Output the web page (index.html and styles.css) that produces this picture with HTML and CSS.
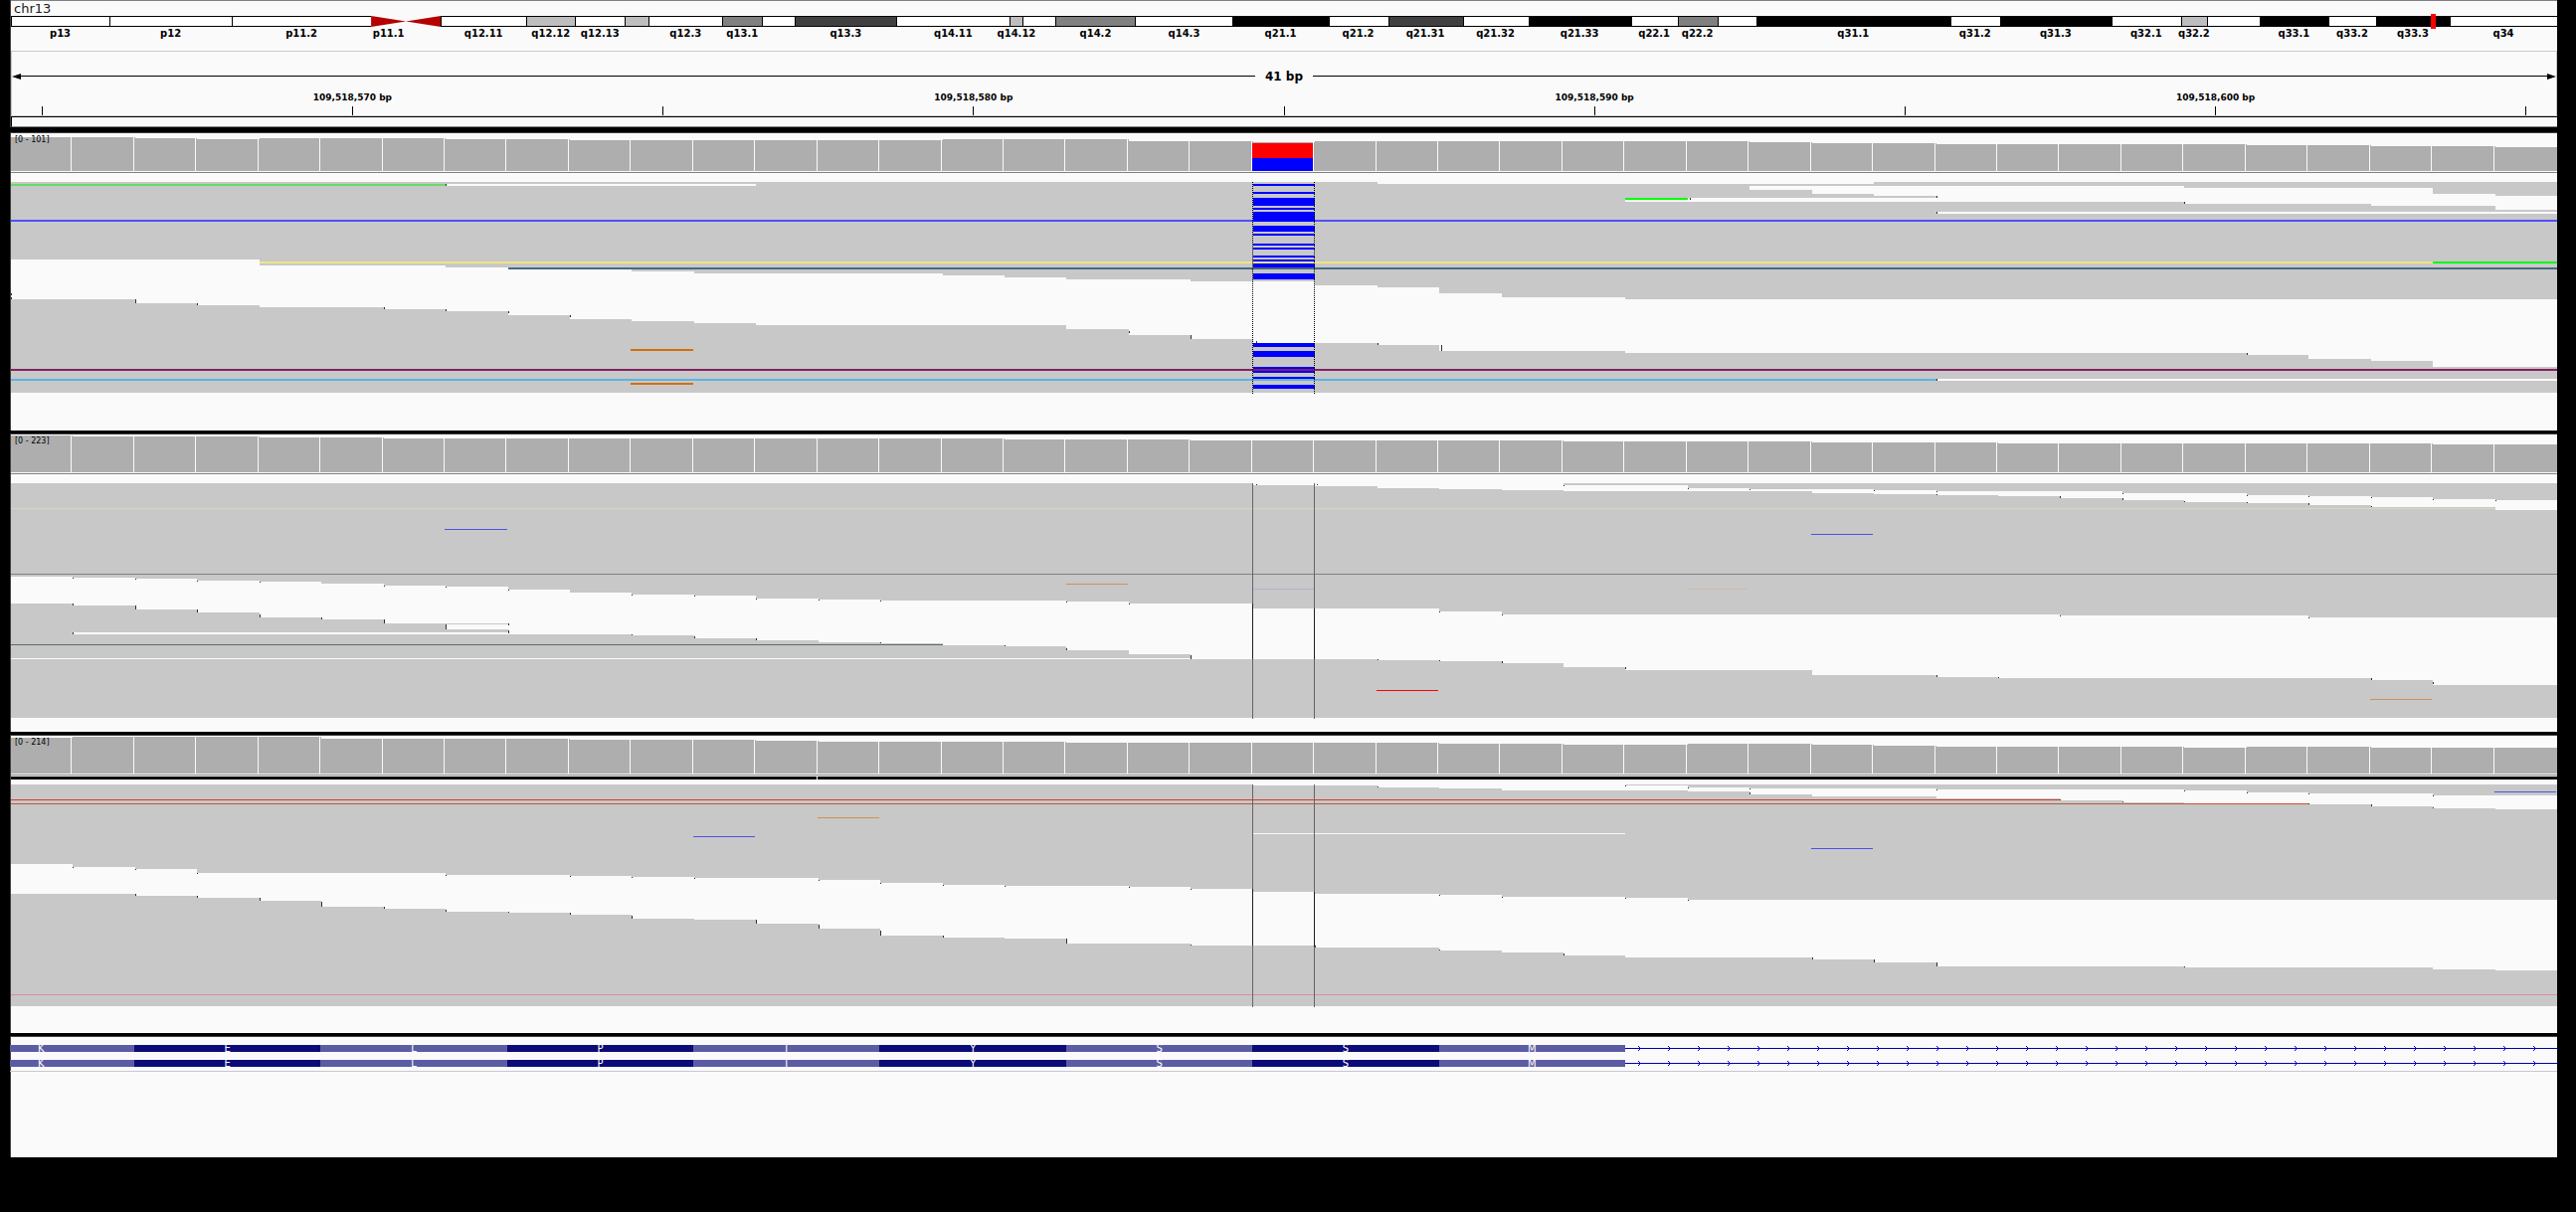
FILE: index.html
```html
<!DOCTYPE html>
<html lang="en">
<head>
<meta charset="utf-8">
<title>chr13 – genome browser</title>
<link rel="stylesheet" href="styles.css">
</head>
<body>
<main class="browser">

  <section class="chromosome">
    <h1 class="chromosome-name">chr13</h1>
    <div class="ideogram">
      <div class="band" style="flex-grow:99"><i class="stain"></i><span>p13</span></div>
      <div class="band" style="flex-grow:123"><i class="stain"></i><span>p12</span></div>
      <div class="band" style="flex-grow:140"><i class="stain"></i><span>p11.2</span></div>
      <div class="band" style="flex-grow:35"><i class="stain cen cen-p"></i><span>p11.1</span></div>
      <div class="band" style="flex-grow:35"><i class="stain cen cen-q"></i></div>
      <div class="band" style="flex-grow:86"><i class="stain"></i><span>q12.11</span></div>
      <div class="band" style="flex-grow:49"><i class="stain g25"></i><span>q12.12</span></div>
      <div class="band" style="flex-grow:50"><i class="stain"></i><span>q12.13</span></div>
      <div class="band" style="flex-grow:24"><i class="stain g25"></i></div>
      <div class="band" style="flex-grow:74"><i class="stain"></i><span>q12.3</span></div>
      <div class="band" style="flex-grow:40"><i class="stain g50"></i><span>q13.1</span></div>
      <div class="band" style="flex-grow:33"><i class="stain"></i></div>
      <div class="band" style="flex-grow:102"><i class="stain g75"></i><span>q13.3</span></div>
      <div class="band" style="flex-grow:114"><i class="stain"></i><span>q14.11</span></div>
      <div class="band" style="flex-grow:13"><i class="stain g25"></i><span>q14.12</span></div>
      <div class="band" style="flex-grow:33"><i class="stain"></i></div>
      <div class="band" style="flex-grow:80"><i class="stain g50"></i><span>q14.2</span></div>
      <div class="band" style="flex-grow:98"><i class="stain"></i><span>q14.3</span></div>
      <div class="band" style="flex-grow:96"><i class="stain g100"></i><span>q21.1</span></div>
      <div class="band" style="flex-grow:60"><i class="stain"></i><span>q21.2</span></div>
      <div class="band" style="flex-grow:75"><i class="stain g75"></i><span>q21.31</span></div>
      <div class="band" style="flex-grow:66"><i class="stain"></i><span>q21.32</span></div>
      <div class="band" style="flex-grow:103"><i class="stain g100"></i><span>q21.33</span></div>
      <div class="band" style="flex-grow:47"><i class="stain"></i><span>q22.1</span></div>
      <div class="band" style="flex-grow:40"><i class="stain g50"></i><span>q22.2</span></div>
      <div class="band" style="flex-grow:39"><i class="stain"></i></div>
      <div class="band" style="flex-grow:195"><i class="stain g100"></i><span>q31.1</span></div>
      <div class="band" style="flex-grow:50"><i class="stain"></i><span>q31.2</span></div>
      <div class="band" style="flex-grow:112"><i class="stain g100"></i><span>q31.3</span></div>
      <div class="band" style="flex-grow:70"><i class="stain"></i><span>q32.1</span></div>
      <div class="band" style="flex-grow:26"><i class="stain g25"></i><span>q32.2</span></div>
      <div class="band" style="flex-grow:53"><i class="stain"></i></div>
      <div class="band" style="flex-grow:69"><i class="stain g100"></i><span>q33.1</span></div>
      <div class="band" style="flex-grow:48"><i class="stain"></i><span>q33.2</span></div>
      <div class="band" style="flex-grow:74"><i class="stain g100"></i><span>q33.3</span></div>
      <div class="band" style="flex-grow:108"><i class="stain"></i><span>q34</span></div>
      <i class="locus" style="left:95.04%"></i>
    </div>
  </section>

  <section class="ruler">
    <div class="span-row">
      <svg class="arrow" width="9" height="6" viewBox="0 0 9 6"><path d="M0 3 9 0V6Z"/></svg>
      <i class="span-line"></i>
      <span class="span-text">41 bp</span>
      <i class="span-line"></i>
      <svg class="arrow" width="9" height="6" viewBox="0 0 9 6"><path d="M9 3 0 0V6Z"/></svg>
    </div>
    <div class="positions">
      <span class="pos-5">109,518,570 bp</span>
      <span class="pos-15">109,518,580 bp</span>
      <span class="pos-25">109,518,590 bp</span>
      <span class="pos-35">109,518,600 bp</span>
    </div>
    <svg class="plot ticks" height="9" viewBox="0 0 41 9" preserveAspectRatio="none">
      <path class="tick-line" d="M.5 0v9M5.5 0v9M10.5 0v9M15.5 0v9M20.5 0v9M25.5 0v9M30.5 0v9M35.5 0v9M40.5 0v9"/>
    </svg>
  </section>
  <div class="roi-bar"></div>

  <div class="divider divider-top"></div>

  <section class="track track-a">
    <div class="coverage">
      <span class="range">[0 - 101]</span>
      <svg class="plot" height="38" viewBox="0 0 41 38" preserveAspectRatio="none">
        <path class="bars" d="M0 38V4H2V5H3V6H4V5H7V6H9V7H15V6H18V8H20V9H21V8H28V9H29V10H31V11H36V12H38V13H40V14H41V38Z"/>
        <path fill="#f00" transform="translate(-.015 0)" d="M20 10h1v15h-1z"/>
        <path fill="#00f" transform="translate(-.015 0)" d="M20 25h1v13h-1z"/>
        <path id="gaps" class="gaps" transform="translate(-.025 0)" d="M1 0v38M2 0v38M3 0v38M4 0v38M5 0v38M6 0v38M7 0v38M8 0v38M9 0v38M10 0v38M11 0v38M12 0v38M13 0v38M14 0v38M15 0v38M16 0v38M17 0v38M18 0v38M19 0v38M20 0v38M21 0v38M22 0v38M23 0v38M24 0v38M25 0v38M26 0v38M27 0v38M28 0v38M29 0v38M30 0v38M31 0v38M32 0v38M33 0v38M34 0v38M35 0v38M36 0v38M37 0v38M38 0v38M39 0v38M40 0v38"/>
      </svg>
    </div>
    <svg class="plot reads" height="213" viewBox="0 0 41 213" preserveAspectRatio="none">
      <path class="read" d="M0 0H41V212H0Z"/>
      <path class="empty" d="M7 2h5v2h-5zM22 0h8v2h-8zM31 30h10v2h-10zM31 198h10v2h-10z"/>
      <path class="empty" d="M26 18V20H35V22H38V24H40V28H41V14H40V12H39V6H35V4H28V8H29V12H30V14H31V16H27V18Z"/>
      <path class="empty" d="M0 78H4V84H7V86H8V88H10V90H11V92H15V94H16V96H17V98H19V100H21V104H22V106H23V112H24V116H26V118H41V186H39V180H38V178H37V174H36V172H26V170H23V164H22V162H20V158H19V154H18V148H17V144H12V142H11V140H10V138H9V134H8V130H7V128H6V126H4V124H3V122H2V118H0Z"/>
      <path fill="#64dc64" d="M0 2h7v2h-7z"/>
      <path fill="#0f0" d="M26 16h1v2h-1zM39 80h2v2h-2z"/>
      <path fill="#5050ff" d="M0 38h41v2h-41z"/>
      <path fill="#f0e682" d="M4 80h35v2h-35z"/>
      <path fill="#d2700a" transform="translate(-.015 0)" d="M10 168h1v2h-1zM10 202h1v2h-1z"/>
      <path fill="#5ab4e1" d="M0 198h31v2h-31z"/>
      <path fill="#00f" d="M20 2h1v2h-1zM20 10h1v2h-1zM20 16h1v8h-1zM20 26h1v2h-1zM20 30h1v10h-1zM20 44h1v6h-1zM20 52h1v2h-1zM20 62h1v2h-1zM20 66h1v2h-1zM20 74h1v2h-1zM20 78h1v2h-1zM20 82h1v4h-1zM20 92h1v6h-1zM20 162h1v4h-1zM20 170h1v6h-1zM20 186h1v2h-1zM20 190h1v2h-1zM20 196h1v2h-1zM20 204h1v4h-1z"/>
      <path fill="#466a82" d="M8 86h33v2h-33z"/>
      <path fill="#82205f" d="M0 188h41v2h-41z"/>
      <path class="end" transform="translate(.008 0)" d="M7 2v2M0 112v2M0 116v2M2 118v4M3 122v2M6 126v2M7 128v2M8 130v2M9 134v2M18 150v2M19 154v4M20.05 160v2M22 162v2M23.03 164v6M36 172v2M27.03 16v2M31 14v2M31 30v2M35 20v2M31 198v2"/>
      <path class="center dashed" transform="translate(-.008 0)" d="M20 0v213M21 0v213"/>
    </svg>
  </section>

  <div class="divider"></div>

  <section class="track track-b">
    <div class="coverage">
      <span class="range">[0 - 223]</span>
      <svg class="plot" height="38" viewBox="0 0 41 38" preserveAspectRatio="none">
        <path class="bars" d="M0 38V1H1V2H4V3H6V4H16V5H19V6H25V7H29V8H32V9H39V10H41V38Z"/>
        <use href="#gaps"/>
      </svg>
    </div>
    <svg class="plot reads" height="237" viewBox="0 0 41 237" preserveAspectRatio="none">
      <path class="read" d="M0 0H41V236H0Z"/>
      <path fill="#d4d8be" d="M0 25h40v1h-40z"/>
      <path class="empty" d="M20 0V2H21V3H22V5H23V6H24V7H25V8H29V10H30V11H31V12H32V13H33V15H34V17H35V19H36V20H37V22H38V24H40V27H41V17H40V16H39V14H38V13H37V12H36V10H34V8H31V7H30V6H28V5H27V2H25V0Z"/>
      <path class="empty" d="M0 94H1V95H2V96H3V98H4V99H5V101H6V103H7V104H8V107H9V110H10V112H11V113H12V116H13V117H14V118H17V119H18V121H20V126H23V129H24V132H33V133H37V135H41V203H39V198H38V196H32V195H31V193H29V188H26V185H25V181H24V179H23V178H22V177H0V176H19V172H18V168H17V164H16V163H15V161H14V160H13V158H12V156H11V153H10V152H1V150H8V147H7V142H8V141H6V137H5V135H4V130H3V127H2V123H1V121H0Z"/>
      <path fill="#80808c" d="M0 91h41v1h-41z"/>
      <path fill="#5a6e69" d="M0 162h15v1h-15z"/>
      <g transform="translate(-.015 0)">
        <path fill="#5050e6" d="M7 46h1v1h-1zM29 51h1v1h-1z"/>
        <path fill="#cd915a" d="M17 101h1v1h-1zM38 217h1v1h-1z"/>
        <path fill="#b4b0d8" d="M20 106h1v1h-1z"/>
        <path fill="#ccbfae" d="M27 106h1v1h-1z"/>
        <path fill="#f00" d="M22 208h1v1h-1z"/>
      </g>
      <path class="end" transform="translate(.008 0)" d="M1 121v2M2 123v4M3 127v3M4 132v3M5 135v2M6 137v4M7 142v5M8 141v2M8 148v3M1 150v2M10 152v1M11 154v2M12 156v2M14 160v1M16 163v1M17 166v2M19 173v4M22 177v1M23 178v1M24 179v2M26 185v2M31 193v2M32 195v1M38 196v2M39 200v2M1 95v1M2 96v1M3 98v1M4 99v1M6 103v1M7 104v1M8 107v1M10 112v1M11 113v1M12 116v1M13 117v1M14 118v1M17 119v1M18 121v1M23 129v1M24 132v1M33 133v1M37 135v1M20.05 1v1M21.03 1v1M25 2v1M27 5v1M28 6v1M30 7v1M31 8v1M31 11v1M33 13v2M34 10v1M34 15v2M35 18v1M36 12v1M36 19v1M37 13v1M37 20v2M38 14v1M38 23v1M39 16v1M40 17v1"/>
      <path class="center" transform="translate(-.008 0)" d="M20 0v237M21 0v237"/>
      <path class="center strong" transform="translate(-.008 0)" d="M20 121v56M21 126v51"/>
    </svg>
  </section>

  <div class="divider"></div>

  <section class="track track-c">
    <div class="coverage">
      <span class="range">[0 - 214]</span>
      <svg class="plot" height="38" viewBox="0 0 41 38" preserveAspectRatio="none">
        <path class="bars" d="M0 38V2H1V1H5V3H9V4H12V5H13V6H17V7H23V8H25V9H27V8H29V9H30V10H31V11H35V12H36V11H38V12H41V38Z"/>
        <use href="#gaps"/>
      </svg>
    </div>
    <svg class="plot insertion-band" height="3" viewBox="0 0 41 3" preserveAspectRatio="none">
      <path d="M0 0H41V3H0Z"/>
      <path class="gaps" transform="translate(-.025 0)" d="M13 0v3"/>
    </svg>
    <svg class="plot reads" height="224" viewBox="0 0 41 224" preserveAspectRatio="none">
      <path class="read" d="M0 0H41V223H0Z"/>
      <path class="empty" d="M20 0V1H22V3H23V4H24V6H27V7H28V10H29V12H31V14H33V16H34V18H35V19H37V20H38V22H39V24H40V25H41V11H39V9H37V8H36V6H35V5H31V4H28V3H27V1H26V0ZM20 49h6v1h-6z"/>
      <path class="empty" d="M0 80H1V83H2V85H3V89H7V91H9V92H10V93H11V94H13V96H14V99H15V101H16V102H18V103H19V105H20V108H21V110H23V111H24V113H26V114H27V116H41V187H40V186H39V184H35V183H31V179H30V176H29V174H26V172H25V169H24V167H23V164H21V162H19V160H17V155H16V154H15V152H14V145H13V140H12V136H11V135H10V131H9V129H8V128H7V125H6V123H5V117H4V114H3V112H2V110H0Z"/>
      <path fill="#c83c32" d="M0 15h33v1h-33z"/>
      <path fill="#be5a32" d="M0 19h37v1h-37z"/>
      <g transform="translate(-.015 0)">
        <path fill="#d2914b" d="M13 33h1v1h-1z"/>
        <path fill="#5050e6" d="M11 52h1v1h-1zM29 64h1v1h-1zM40 7h1v1h-1z"/>
      </g>
      <path fill="#dc8ca8" d="M0 211h41v1h-41z"/>
      <path class="end" transform="translate(.008 0)" d="M1 83v1M2 85v1M3 89v1M7 91v1M9 92v1M10 93v1M11 94v1M13 96v1M14 99v1M15 101v1M16 102v1M18 103v1M19 105v1M23 111v1M24 113v1M26 114v1M27 116v1M2 110v2M3 112v2M4 114v3M5 118v5M6 123v2M7 126v2M8 128v1M9 129v2M10 132v3M12 136v4M13 141v4M14 147v5M15 152v2M17 155v5M19 161v1M21 162v2M23 166v1M25 170v2M29 174v2M30 176v3M31 179v4M35 183v1M22 2v1M26 1v1M27 3v1M28 4v1M28 8v2M31 5v1M33 15v1M34 17v1M35 6v1M36 8v1M37 9v1M37 19v1M38 20v2M39 11v1M39 23v1"/>
      <path class="center" transform="translate(-.008 0)" d="M20 0v224M21 0v224"/>
      <path class="center strong" transform="translate(-.008 0)" d="M20 105v57M21 108v55"/>
    </svg>
  </section>

  <div class="divider"></div>

  <section class="genes">
    <svg class="defs" width="0" height="0" aria-hidden="true">
      <defs>
        <pattern id="chevrons" width="30" height="7" patternUnits="userSpaceOnUse">
          <path d="M0 3h30v1H0z" fill="#0000b4"/>
          <path d="M13 1h1v1h1v3h-1v1h-1v-1h1v-3h-1z" fill="#0000dc"/>
        </pattern>
      </defs>
    </svg>
    <div class="transcript">
      <span class="codon first">K</span><span class="codon dark">E</span><span class="codon">L</span><span class="codon dark">P</span><span class="codon">I</span><span class="codon dark">Y</span><span class="codon">S</span><span class="codon dark">S</span><span class="codon">M</span>
      <svg class="intron" height="7"><rect width="100%" height="7" fill="url(#chevrons)"/></svg>
    </div>
    <div class="transcript">
      <span class="codon first">K</span><span class="codon dark">E</span><span class="codon">L</span><span class="codon dark">P</span><span class="codon">I</span><span class="codon dark">Y</span><span class="codon">S</span><span class="codon dark">S</span><span class="codon">M</span>
      <svg class="intron" height="7"><rect width="100%" height="7" fill="url(#chevrons)"/></svg>
    </div>
  </section>
  <div class="blank"></div>

</main>
</body>
</html>
```
FILE: styles.css
```css
* {
  box-sizing: border-box;
}

body {
  margin: 0;
  min-height: 100vh;
  padding: 0 19px 0 10px;
  background: #000;
  color: #000;
  font-family: "DejaVu Sans", sans-serif;
}

.browser {
  border-left: 1px solid #404040;
  background: #fafafa;
}

svg {
  display: block;
}

.plot {
  width: 100%;
  shape-rendering: crispEdges;
}

/* Chromosome ideogram */
.chromosome {
  height: 51px;
  border-top: 1px solid #808080;
}

.chromosome-name {
  margin: 0;
  padding-left: 3px;
  font-size: 13px;
  line-height: 15px;
  font-weight: normal;
  color: #202020;
}

.ideogram {
  position: relative;
  display: flex;
}

.band {
  flex: 1 1 0;
  min-width: 0;
  display: flex;
  flex-direction: column;
  align-items: center;
  font-size: 10px;
  line-height: 13px;
  font-weight: bold;
  white-space: nowrap;
}

.stain {
  width: 100%;
  height: 11px;
  border: solid #000;
  border-width: 1px 0 1px 1px;
  background: #fff;
}

.g25 { background: #bebebe; }
.g50 { background: #808080; }
.g75 { background: #404040; }
.g100 { background: #000; }

.cen {
  border: 0;
  background: #b40000;
}

.cen-p { clip-path: polygon(0 0, 100% 50%, 0 100%); }
.cen-q { clip-path: polygon(100% 0, 0 50%, 100% 100%); }

.locus {
  position: absolute;
  top: -2px;
  width: 5px;
  height: 15px;
  background: #f00;
}

/* Ruler */
.ruler {
  padding-top: 10px;
  height: 66px;
  box-shadow: inset 0 0 0 1px #c8c8d0;
}

.span-row {
  display: flex;
  align-items: center;
  height: 31px;
  padding: 0 1px;
}

.span-line {
  flex: 1;
  height: 1px;
  background: #000;
}

.span-text {
  width: 58px;
  text-align: center;
  font-size: 12px;
  font-weight: bold;
}

.positions {
  display: grid;
  grid-template-columns: repeat(41, 1fr);
  padding-bottom: 2px;
  font-size: 9px;
  line-height: 13px;
  font-weight: bold;
  text-align: center;
  white-space: nowrap;
}

.pos-5 { grid-column: 2 / 11; }
.pos-15 { grid-column: 12 / 21; }
.pos-25 { grid-column: 22 / 31; }
.pos-35 { grid-column: 32 / 41; }

.tick-line,
.gaps,
.end,
.center {
  fill: none;
  stroke-width: 1px;
  vector-effect: non-scaling-stroke;
}

.tick-line { stroke: #000; }

.roi-bar {
  height: 11px;
  border: solid #000;
  border-width: 1px 0 1px 1px;
  border-bottom-color: #808080;
}

.divider {
  height: 4px;
  margin-left: -1px;
  background: #000;
  border-bottom: 1px solid #404040;
}

.divider-top {
  height: 6px;
}

/* Alignment tracks */
.coverage {
  position: relative;
  padding-bottom: 1px;
  border-bottom: 1px solid #808080;
  margin-bottom: 9px;
}

.range {
  position: absolute;
  left: 4px;
  top: 2px;
  font-size: 8px;
  line-height: 10px;
}

.track-a { padding-bottom: 37px; }
.track-b { padding-bottom: 13px; }
.track-c { padding-bottom: 26px; }
.track-c .coverage { margin-bottom: 1px; }

.insertion-band { margin-bottom: 5px; }

.bars { fill: #aeaeae; }
.gaps { stroke: #fafafa; }
.read { fill: #c8c8c8; }
.empty { fill: #fafafa; }
.end { stroke: #303030; }
.center { stroke: #646464; }
.strong { stroke: #202020; }

.dashed {
  stroke: #000;
  stroke-dasharray: 1 1;
}

/* Gene models */
.genes {
  display: flex;
  flex-direction: column;
  gap: 8px;
  margin-left: -1px;
  padding: 8px 0 4px;
  border-bottom: 1px solid #c8c8d2;
}

.defs {
  position: absolute;
}

.transcript {
  display: grid;
  grid-template-columns: repeat(41, 1fr);
  height: 7px;
}

.codon {
  grid-column: span 3;
  background: #5c5ca4;
  color: #fff;
  font-size: 10px;
  line-height: 7px;
  text-align: center;
}

.first {
  grid-column: span 2;
  padding-right: 50%;
}

.dark { background: #0c0c78; }

.intron {
  grid-column: span 15;
  width: 100%;
  shape-rendering: crispEdges;
}

.blank {
  height: 86px;
}
```
